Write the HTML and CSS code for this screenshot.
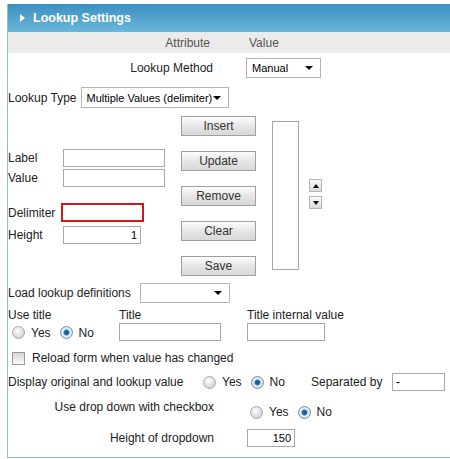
FILE: index.html
```html
<!DOCTYPE html>
<html>
<head>
<meta charset="utf-8">
<link rel="stylesheet" href="styles.css">
</head>
<body>
<div class="panel">
  <div class="header"><span class="tri"></span><span class="title">Lookup Settings</span></div>
  <div class="colhead"><span class="ch-attr">Attribute</span><span class="ch-val">Value</span></div>

  <div class="row method">
    <span class="method-label">Lookup Method</span>
    <div class="sel sel-method"><span>Manual</span><i class="caret"></i></div>
  </div>

  <div class="row ltype">
    <span>Lookup Type</span>
    <div class="sel sel-type"><span>Multiple Values (delimiter)</span><i class="caret"></i></div>
  </div>

  <div class="mid">
    <div class="fields">
      <div class="f f-label"><span class="fl">Label</span><input class="in in-label" type="text"></div>
      <div class="f f-value"><span class="fl">Value</span><input class="in in-label" type="text"></div>
      <div class="f f-delim"><span class="fl fl-d">Delimiter</span><input class="in in-delim" type="text"></div>
      <div class="f f-height"><span class="fl">Height</span><input class="in in-height" type="text" value="1"></div>
    </div>
    <div class="buttons">
      <button class="btn">Insert</button>
      <button class="btn">Update</button>
      <button class="btn">Remove</button>
      <button class="btn">Clear</button>
      <button class="btn">Save</button>
    </div>
    <div class="listbox"></div>
    <div class="arrows">
      <span class="arr"><i class="up"></i></span>
      <span class="arr"><i class="down"></i></span>
    </div>
  </div>

  <div class="row loaddef">
    <span class="load-label">Load lookup definitions</span>
    <div class="sel sel-load"><span></span><i class="caret"></i></div>
  </div>

  <div class="titlegrid">
    <span>Use title</span>
    <span>Title</span>
    <span>Title internal value</span>
    <div class="radios"><span class="radio"></span><span class="rl">Yes</span><span class="radio on"></span><span class="rl">No</span></div>
    <input class="in in-title" type="text">
    <input class="in in-tiv" type="text">
  </div>

  <div class="row reload">
    <span class="check"></span><span>Reload form when value has changed</span>
  </div>

  <div class="row display">
    <span class="disp-label">Display original and lookup value</span>
    <div class="radios r-display"><span class="radio"></span><span class="rl">Yes</span><span class="radio on"></span><span class="rl">No</span></div>
    <span class="sep">Separated by</span>
    <input class="in in-sep" type="text" value="-">
  </div>

  <div class="row dropdown">
    <span class="rlabel">Use drop down with checkbox</span>
    <div class="radios r-drop"><span class="radio"></span><span class="rl">Yes</span><span class="radio on"></span><span class="rl">No</span></div>
  </div>

  <div class="row hdrop">
    <span class="rlabel">Height of dropdown</span>
    <input class="in in-hd" type="text" value="150">
  </div>
</div>
</body>
</html>
```
FILE: styles.css
```css
html, body {
  margin: 0;
  padding: 0;
  overflow: hidden;
  background: #fff;
}
body {
  font-family: "Liberation Sans", Arial, sans-serif;
  font-size: 12px;
  color: #222;
}
.panel {
  margin: 4px 0 0 7px;
  width: 460px;
  height: 454px;
  border-left: 1px solid #8cc0dc;
  border-bottom: 1px solid #8cc0dc;
  box-sizing: border-box;
}
.header {
  height: 28px;
  background: linear-gradient(#3b8fc2, #6bb7da);
  display: flex;
  align-items: center;
  padding-left: 12px;
  color: #fff;
  font-weight: bold;
  font-size: 12.5px;
}
.tri {
  width: 0;
  height: 0;
  border-top: 4px solid transparent;
  border-bottom: 4px solid transparent;
  border-left: 5px solid #fff;
  margin-right: 8px;
  margin-top: -1px;
}
.colhead {
  height: 21px;
  background: #ebebeb;
  display: flex;
  align-items: center;
  color: #555;
}
.ch-attr {
  width: 202px;
  text-align: right;
}
.ch-val {
  margin-left: 39px;
}
.row {
  display: flex;
  align-items: center;
}
.sel {
  background: #fff;
  border: 1px solid #b5b5b5;
  box-sizing: border-box;
  display: flex;
  align-items: center;
  justify-content: space-between;
  padding: 0 7px 0 5px;
  font-size: 11px;
  color: #000;
}
.caret {
  width: 0;
  height: 0;
  border-left: 4px solid transparent;
  border-right: 4px solid transparent;
  border-top: 4px solid #000;
}
.method {
  margin-top: 5px;
}
.method-label {
  width: 205px;
  text-align: right;
  margin-right: 33px;
}
.sel-method {
  width: 75px;
  height: 20px;
}
.ltype {
  margin-top: 9px;
}
.sel-type {
  width: 148px;
  height: 21px;
  margin-left: 4px;
}
.mid {
  margin-top: 8px;
  display: flex;
  align-items: flex-start;
  height: 160px;
}
.fields {
  width: 173px;
  padding-top: 33px;
}
.f {
  display: flex;
  align-items: center;
}
.fl {
  width: 55px;
}
.fl-d {
  width: 53px;
}
.in {
  border: 1px solid #a9a9a9;
  box-sizing: border-box;
  height: 18px;
  padding: 0 3px;
  font-family: "Liberation Sans", Arial, sans-serif;
  font-size: 11px;
  color: #000;
  background: #fff;
  outline: none;
  margin: 0;
}
.in-label {
  width: 102px;
}
.f-value {
  margin-top: 2px;
}
.f-delim {
  margin-top: 16px;
}
.in-delim {
  width: 83px;
  height: 19px;
  border: 2px solid #d01818;
}
.f-height {
  margin-top: 4px;
}
.in-height {
  width: 78px;
  text-align: right;
}
.buttons {
  width: 75px;
  display: flex;
  flex-direction: column;
  gap: 15px;
}
.btn {
  width: 75px;
  height: 20px;
  border: 1px solid #a0a0a0;
  background: linear-gradient(#fdfdfd, #e6e6e6 50%, #d8d8d8);
  font-family: "Liberation Sans", Arial, sans-serif;
  font-size: 12px;
  color: #333;
  padding: 0;
  margin: 0;
}
.listbox {
  margin-left: 16px;
  margin-top: 5px;
  width: 27px;
  height: 149px;
  border: 1px solid #a6a6a6;
  box-sizing: border-box;
}
.arrows {
  margin-left: 10px;
  margin-top: 63px;
  display: flex;
  flex-direction: column;
  gap: 4px;
}
.arr {
  width: 13px;
  height: 13px;
  box-sizing: border-box;
  border: 1px solid #b5b5b5;
  background: linear-gradient(#fafafa, #dcdcdc);
  display: flex;
  align-items: center;
  justify-content: center;
}
.up {
  width: 0;
  height: 0;
  border-left: 3px solid transparent;
  border-right: 3px solid transparent;
  border-bottom: 4px solid #111;
}
.down {
  width: 0;
  height: 0;
  border-left: 3px solid transparent;
  border-right: 3px solid transparent;
  border-top: 4px solid #111;
}
.loaddef {
  margin-top: 7px;
}
.load-label {
  width: 132px;
}
.sel-load {
  width: 90px;
  height: 20px;
}
.titlegrid {
  display: grid;
  grid-template-columns: 111px 128px auto;
  row-gap: 1px;
  margin-top: 5px;
  align-items: center;
}
.radios {
  display: flex;
  align-items: center;
}
.radio {
  width: 13px;
  height: 13px;
  border-radius: 50%;
  box-sizing: border-box;
  border: 1px solid #a8a8a8;
  background: radial-gradient(circle at 40% 35%, #fdfdfd, #d4d4d4 75%);
}
.radio.on {
  border-color: #6f8fa8;
  background: radial-gradient(circle at 50% 50%, #0b4f85 0, #2a78b4 2.5px, #e8eef2 3.5px, #d0d6dc 100%);
}
.rl {
  margin-left: 6px;
  margin-right: 9px;
}
.titlegrid .radios {
  padding-left: 4px;
  padding-top: 1px;
}
.in-title {
  width: 102px;
}
.in-tiv {
  width: 78px;
}
.reload {
  margin-top: 10px;
}
.check {
  width: 13px;
  height: 13px;
  box-sizing: border-box;
  border: 1px solid #9a9a9a;
  background: linear-gradient(#d6d6d6, #fbfbfb);
  margin-left: 4px;
  margin-right: 7px;
}
.display {
  margin-top: 8px;
}
.disp-label {
  width: 195px;
}
.r-display {
  width: 108px;
}
.sep {
  width: 81px;
}
.in-sep {
  width: 53px;
  font-size: 12px;
}
.dropdown {
  margin-top: 9px;
  align-items: flex-start;
}
.rlabel {
  width: 206px;
  text-align: right;
}
.r-drop {
  margin-left: 36px;
  margin-top: 5px;
}
.hdrop {
  margin-top: 10px;
}
.in-hd {
  width: 48px;
  margin-left: 33px;
  text-align: right;
}
```
